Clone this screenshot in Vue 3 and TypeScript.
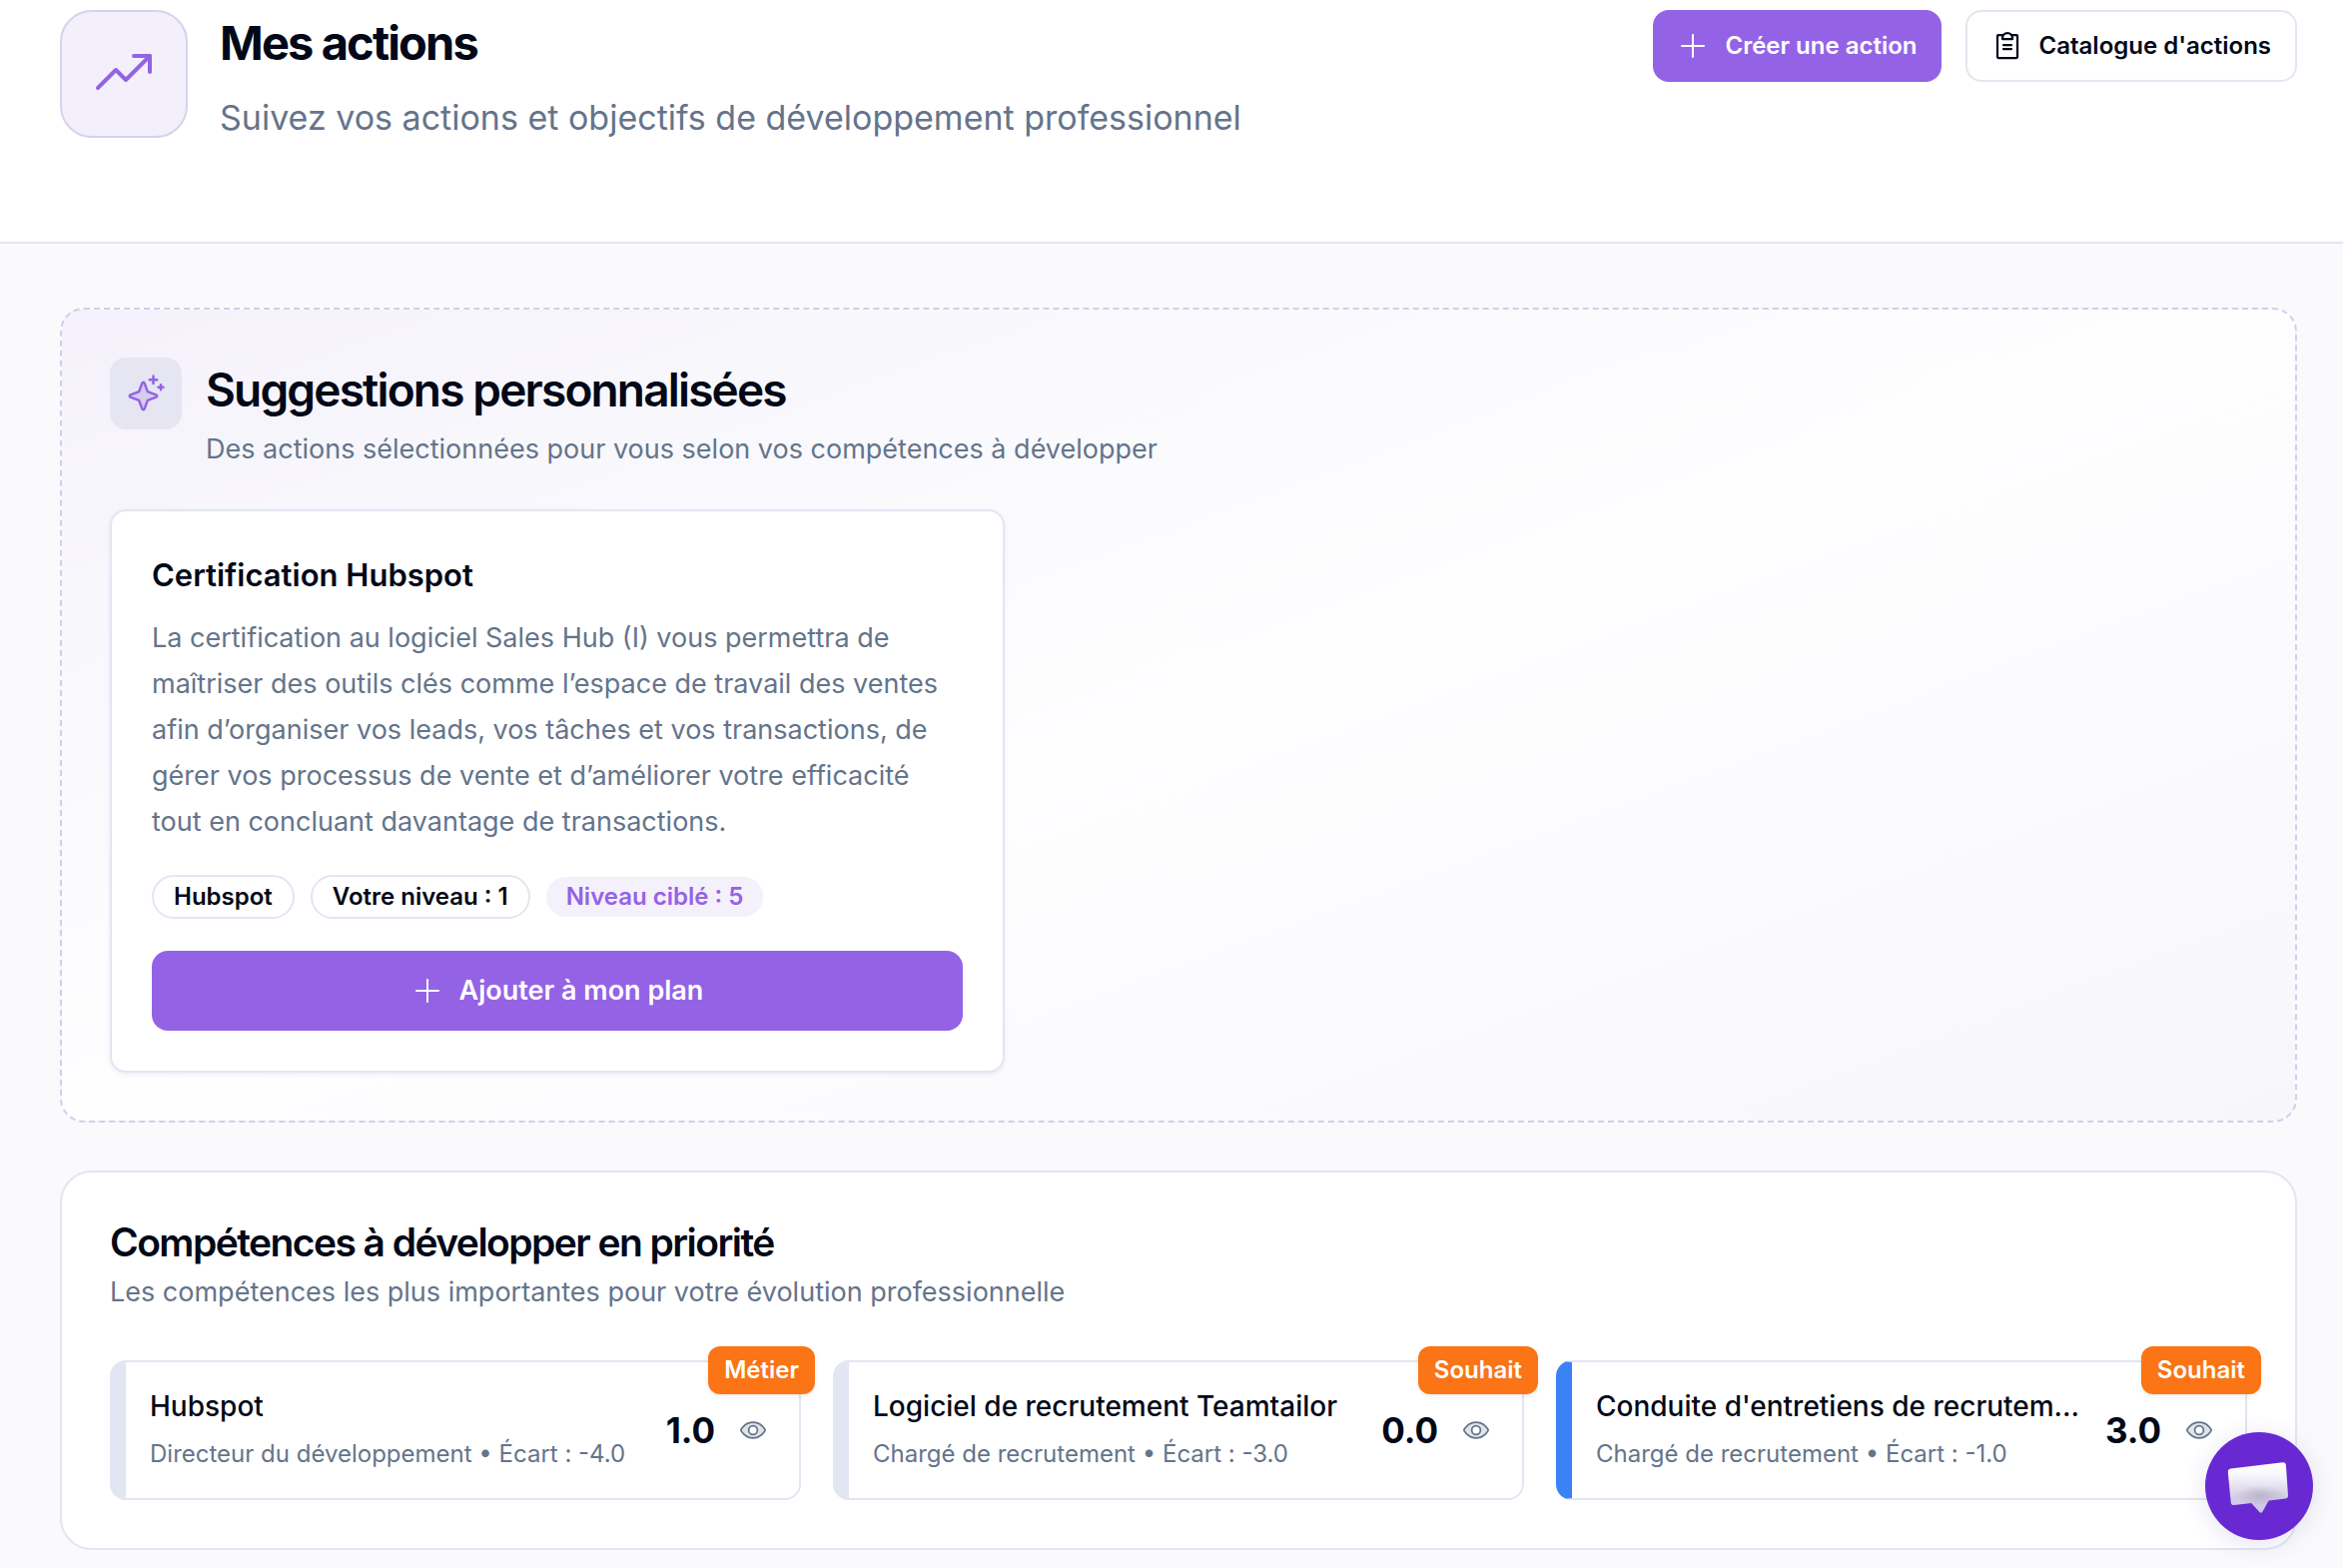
<script setup lang="ts">
interface Skill {
  name: string
  detail: string
  score: string
  tag: string
  tone: 'neutral' | 'blue'
}

const skills: Skill[] = [
  { name: 'Hubspot', detail: 'Directeur du développement • Écart : -4.0', score: '1.0', tag: 'Métier', tone: 'neutral' },
  { name: 'Logiciel de recrutement Teamtailor', detail: 'Chargé de recrutement • Écart : -3.0', score: '0.0', tag: 'Souhait', tone: 'neutral' },
  { name: "Conduite d'entretiens de recrutem...", detail: 'Chargé de recrutement • Écart : -1.0', score: '3.0', tag: 'Souhait', tone: 'blue' },
]
</script>

<template>
  <div class="page">
    <header class="top">
      <div class="top-icon">
        <svg class="icon" width="64" height="64" viewBox="0 0 256 256" aria-hidden="true">
          <polyline points="232 56 136 152 96 112 24 184" />
          <polyline points="232 120 232 56 168 56" />
        </svg>
      </div>
      <div class="top-text">
        <h1>Mes actions</h1>
        <p>Suivez vos actions et objectifs de développement professionnel</p>
      </div>
      <div class="top-actions">
        <button type="button" class="btn btn-primary">
          <svg class="icon" width="32" height="32" viewBox="0 0 256 256" aria-hidden="true">
            <path d="M40,128H216M128,40V216" />
          </svg>
          Créer une action
        </button>
        <button type="button" class="btn btn-outline">
          <svg class="icon clip" width="32" height="32" viewBox="0 0 256 256" aria-hidden="true">
            <path d="M96,152H160M96,120H160" />
            <path d="M160,40h40a8,8,0,0,1,8,8V216a8,8,0,0,1-8,8H56a8,8,0,0,1-8-8V48a8,8,0,0,1,8-8H96" />
            <path d="M88,72V64a40,40,0,0,1,80,0v8Z" />
          </svg>
          Catalogue d'actions
        </button>
      </div>
    </header>

    <main class="content">
      <section class="suggestions">
        <div class="section-head">
          <div class="spark">
            <svg class="icon" width="40" height="40" viewBox="0 0 256 256" aria-hidden="true">
              <path class="tint" d="M84.27,171.73l-55.09-20.3a7.92,7.92,0,0,1,0-14.86l55.09-20.3,20.3-55.09a7.92,7.92,0,0,1,14.86,0l20.3,55.09,55.09,20.3a7.92,7.92,0,0,1,0,14.86l-55.09,20.3-20.3,55.09a7.92,7.92,0,0,1-14.86,0Z" />
              <path d="M176,16V64M200,40H152M224,72V104M240,88H208" />
            </svg>
          </div>
          <div>
            <h2 class="title-lg">Suggestions personnalisées</h2>
            <p class="muted">Des actions sélectionnées pour vous selon vos compétences à développer</p>
          </div>
        </div>

        <article class="card">
          <h3>Certification Hubspot</h3>
          <p class="card-text">La certification au logiciel Sales Hub (I) vous permettra de maîtriser des outils clés comme l’espace de travail des ventes afin d’organiser vos leads, vos tâches et vos transactions, de gérer vos processus de vente et d’améliorer votre efficacité tout en concluant davantage de transactions.</p>
          <div class="pills">
            <span class="pill pill-line">Hubspot</span>
            <span class="pill pill-line">Votre niveau : 1</span>
            <span class="pill pill-soft">Niveau ciblé : 5</span>
          </div>
          <button type="button" class="btn btn-primary btn-wide">
            <svg class="icon" width="32" height="32" viewBox="0 0 256 256" aria-hidden="true">
              <path d="M40,128H216M128,40V216" />
            </svg>
            Ajouter à mon plan
          </button>
        </article>
      </section>

      <section class="priority">
        <h2 class="title-md">Compétences à développer en priorité</h2>
        <p class="muted">Les compétences les plus importantes pour votre évolution professionnelle</p>
        <ul class="skills">
          <li v-for="skill in skills" :key="skill.name" class="skill" :class="skill.tone">
            <div class="skill-text">
              <h3>{{ skill.name }}</h3>
              <p>{{ skill.detail }}</p>
            </div>
            <strong class="score">{{ skill.score }}</strong>
            <button type="button" class="eye" :aria-label="`Voir ${skill.name}`">
              <svg class="icon" width="28" height="28" viewBox="0 0 256 256" aria-hidden="true">
                <path class="tint" d="M128,56C48,56,16,128,16,128s32,72,112,72,112-72,112-72S208,56,128,56Z" />
                <circle class="pupil" cx="128" cy="128" r="40" />
              </svg>
            </button>
            <span class="tag">{{ skill.tag }}</span>
          </li>
        </ul>
      </section>
    </main>

    <button type="button" class="chat" aria-label="Ouvrir la messagerie">
      <svg width="108" height="108" viewBox="0 0 108 108" aria-hidden="true">
        <defs>
          <linearGradient id="bubble" x1="0" y1="0" x2="0" y2="1">
            <stop offset="0" stop-color="#ffffff" />
            <stop offset="0.25" stop-color="#f8f7fc" />
            <stop offset="0.7" stop-color="#d3cce6" />
            <stop offset="1" stop-color="#cfc6ea" />
          </linearGradient>
          <radialGradient id="bubble-shade" cx="0.55" cy="0.66" r="0.42" gradientTransform="translate(0 0.33) scale(1 0.5)">
            <stop offset="0" stop-color="#a9a3b8" stop-opacity="0.6" />
            <stop offset="1" stop-color="#a9a3b8" stop-opacity="0" />
          </radialGradient>
        </defs>
        <path fill="url(#bubble)" d="M25.500 36.500L77.500 30.200Q80.600 29.900 80.900 33L83 63.200Q83.200 66.200 80.200 66.600L63.600 68.600L57.500 79.500Q56 81.800 54.200 79.700L46.200 71L29 73Q26 73.300 25.700 70.200L22.800 40Q22.500 37 25.500 36.500Z" />
        <path fill="url(#bubble-shade)" d="M25.500 36.500L77.500 30.200Q80.600 29.900 80.900 33L83 63.200Q83.200 66.200 80.200 66.600L63.600 68.600L57.500 79.500Q56 81.800 54.200 79.700L46.200 71L29 73Q26 73.300 25.700 70.200L22.800 40Q22.500 37 25.500 36.500Z" />
      </svg>
    </button>
  </div>
</template>

<style>
body {
  margin: 0;
  background: #fafafc;
}
</style>

<style scoped>
.page {
  --primary: #9463e5;
  --ink: #020817;
  --muted: #64748b;
  --line: #e2e6f2;
  font-family: Inter, "Liberation Sans", sans-serif;
  color: var(--ink);
  background: #fafafc;
  min-height: 100vh;
}

h1, h2, h3, p, ul {
  margin: 0;
  padding: 0;
}

button {
  font-family: inherit;
  cursor: pointer;
}

.icon {
  flex: none;
  display: block;
  fill: none;
  stroke: currentColor;
  stroke-width: 16;
  stroke-linecap: round;
  stroke-linejoin: round;
}

.clip {
  stroke-width: 18;
}

.tint {
  fill: currentColor;
  fill-opacity: 0.2;
}

.pupil {
  fill: #fff;
}

.top {
  display: flex;
  align-items: flex-start;
  gap: 32px;
  padding: 10px 46px 92px 60px;
  background: #fff;
  border-bottom: 2px solid var(--line);
}

.top-icon {
  flex: none;
  box-sizing: border-box;
  width: 128px;
  height: 128px;
  display: grid;
  place-items: center;
  color: var(--primary);
  background: #f3f0fb;
  border: 2px solid #d8d1ee;
  border-radius: 32px;
}

.top-text {
  flex: 1;
  min-width: 0;
}

h1 {
  font-size: 47px;
  line-height: 66px;
  font-weight: 700;
  letter-spacing: -0.04em;
}

.top-text p {
  margin-top: 10px;
  font-size: 34px;
  line-height: 64px;
  color: var(--muted);
}

.top-actions {
  display: flex;
  gap: 24px;
}

.btn {
  box-sizing: border-box;
  height: 72px;
  display: flex;
  align-items: center;
  justify-content: center;
  gap: 16px;
  padding: 0 24px;
  border: 0;
  border-radius: 16px;
  font-size: 24px;
  line-height: 32px;
  font-weight: 600;
  white-space: nowrap;
}

.btn-primary {
  color: #fff;
  background: var(--primary);
}

.btn-outline {
  color: var(--ink);
  background: #fff;
  border: 2px solid var(--line);
}

.content {
  display: flex;
  flex-direction: column;
  gap: 48px;
  padding: 64px 46px 18px 60px;
}

.suggestions {
  padding: 48px;
  border: 2px dashed #d4cdeb;
  border-radius: 24px;
  background: linear-gradient(to bottom right, #f5f1fc 0%, #f8f7fc 18%, #fefeff 50%, #f7f6fb 100%);
}

.section-head {
  display: flex;
  gap: 24px;
}

.spark {
  flex: none;
  width: 72px;
  height: 72px;
  display: grid;
  place-items: center;
  color: var(--primary);
  background: #e5e6f2;
  border-radius: 16px;
}

.title-lg {
  font-size: 46px;
  line-height: 64px;
  font-weight: 600;
  letter-spacing: -0.04em;
}

.title-md {
  font-size: 39px;
  line-height: 44px;
  font-weight: 600;
  letter-spacing: -0.04em;
}

.muted {
  margin-top: 8px;
  font-size: 27px;
  line-height: 40px;
  color: var(--muted);
}

.card {
  box-sizing: border-box;
  max-width: 896px;
  margin-top: 40px;
  padding: 40px;
  background: #fff;
  border: 2px solid var(--line);
  border-radius: 16px;
  box-shadow: 0 2px 4px rgb(100 90 160 / 10%);
}

.card h3 {
  font-size: 31px;
  line-height: 48px;
  font-weight: 600;
}

.card-text {
  margin-top: 16px;
  font-size: 27px;
  line-height: 46px;
  color: var(--muted);
}

.pills {
  display: flex;
  flex-wrap: wrap;
  align-items: center;
  gap: 16px;
  margin-top: 30px;
}

.pill {
  padding: 0 20px;
  border-radius: 22px;
  font-size: 24px;
  line-height: 40px;
  font-weight: 600;
}

.pill-line {
  border: 2px solid var(--line);
}

.pill-soft {
  color: var(--primary);
  background: #f4f0fc;
}

.btn-wide {
  width: 100%;
  height: 80px;
  margin-top: 32px;
  font-size: 27px;
}

.priority {
  padding: 48px;
  background: #fff;
  border: 2px solid var(--line);
  border-radius: 32px;
}

.skills {
  display: grid;
  grid-template-columns: repeat(3, minmax(0, 1fr));
  gap: 32px;
  margin-top: 48px;
  list-style: none;
}

.skill {
  position: relative;
  display: flex;
  align-items: center;
  gap: 16px;
  padding: 24px 32px 24px 24px;
  border: 2px solid var(--line);
  border-left-width: 16px;
  border-radius: 16px;
}

.skill.blue {
  border-left-color: #3b82f6;
}

.skill-text {
  flex: 1;
  min-width: 0;
}

.skill h3 {
  font-size: 28px;
  line-height: 40px;
  font-weight: 500;
  white-space: nowrap;
  overflow: hidden;
  text-overflow: ellipsis;
}

.skill p {
  margin-top: 8px;
  font-size: 24px;
  line-height: 40px;
  color: var(--muted);
}

.score {
  font-size: 35px;
  line-height: 40px;
  font-weight: 700;
}

.eye {
  margin-left: 8px;
  padding: 0;
  border: 0;
  background: none;
  color: var(--muted);
}

.tag {
  position: absolute;
  top: -16px;
  right: -16px;
  padding: 0 16px;
  color: #fff;
  background: #fb7415;
  border-radius: 12px;
  font-size: 24px;
  line-height: 48px;
  font-weight: 600;
  box-shadow: 0 2px 4px rgb(0 0 0 / 8%);
}

.chat {
  position: fixed;
  right: 30px;
  bottom: 28px;
  width: 108px;
  height: 108px;
  padding: 0;
  border: 0;
  border-radius: 50%;
  background: #6829d2;
  box-shadow: 0 4px 24px rgb(80 50 160 / 14%);
}

.chat svg {
  display: block;
}
</style>
